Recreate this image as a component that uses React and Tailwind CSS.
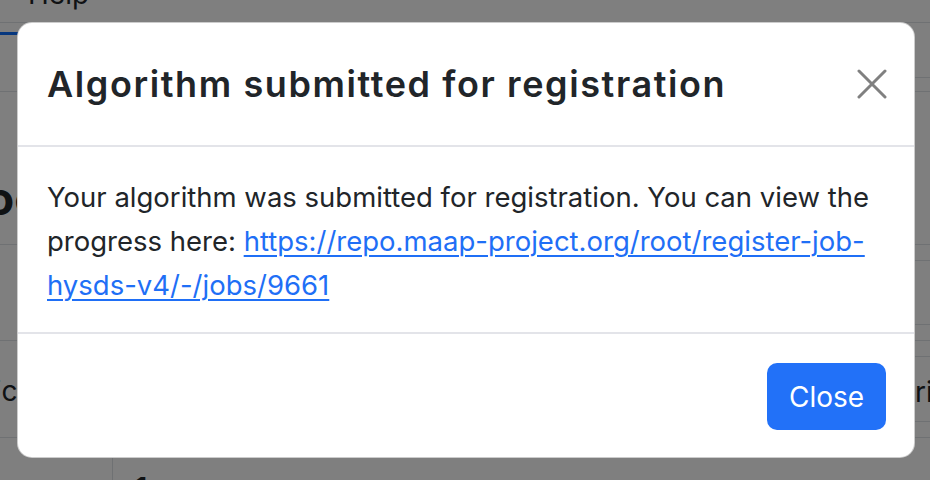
import React from "react";

const sans = "font-['Inter','Liberation_Sans',sans-serif]";

const Backdrop = () => {
  return (
    <div className={`flex h-full flex-col bg-white text-[#212529] ${sans}`}>
      <nav className="flex h-[23px] shrink-0 items-end border-b border-[#dee2e6] pl-[28px]">
        <span className="translate-y-[-10px] text-[28px] leading-[36px]">Help</span>
      </nav>
      <div className="flex h-[69px] shrink-0 border-b border-[#dee2e6]">
        <div className="mt-[9px] h-[3px] w-[260px] bg-[#0d6efd]" />
        <div className="ml-auto h-[55px] w-[60px] border-b border-[#dee2e6]" />
      </div>
      <div className="flex h-[153px] shrink-0 items-center border-b border-[#dee2e6]">
        <span className="-ml-[14px] translate-y-[30px] text-[46px] font-bold leading-none">oo</span>
      </div>
      <div className="flex h-[96px] shrink-0 justify-end border-b border-[#dee2e6]">
        <div className="my-[15px] w-[60px] border-y border-[#dee2e6]" />
      </div>
      <div className="flex h-[97px] shrink-0 items-center justify-between border-b border-[#dee2e6]">
        <span className="-ml-[12px] translate-y-[2px] text-[28px]">lic</span>
        <div className="my-[15px] flex w-[60px] items-center self-stretch border-y border-[#dee2e6] pl-[45px] pt-[6px] text-[28px]">
          rit
        </div>
      </div>
      <div className="flex flex-1">
        <div className="w-[113px] border-r border-[#dee2e6]" />
        <span className="ml-[22px] mt-[36px] text-[28px] font-bold leading-none">1</span>
      </div>
    </div>
  );
};

const Modal = () => {
  return (
    <div
      className={`absolute left-[17px] top-[22px] w-[898px] overflow-hidden rounded-[15px] border border-black/20 bg-white text-[#212529] ${sans}`}
    >
      <div className="flex h-[124px] items-center justify-between border-b-2 border-[#e3e4e9] pl-[29px] pr-[24px]">
        <h5 className="text-[36px] font-semibold leading-[44px] tracking-[1.6px]">
          Algorithm submitted for registration
        </h5>
        <button className="flex h-[36px] w-[36px] items-center justify-center text-[#808080]">
          <svg width="30" height="30" viewBox="0 0 30 30" fill="none">
            <path
              d="M2 2L28 28M28 2L2 28"
              stroke="currentColor"
              strokeWidth="3"
              strokeLinecap="round"
            />
          </svg>
        </button>
      </div>
      <div className="border-b-2 border-[#e3e4e9] px-[29px] pt-[28px] pb-[25px] text-[27.5px] leading-[44px]">
        Your algorithm was submitted for registration. You can view the progress here:{" "}
        <a
          href="#"
          className="text-[#1f6ff6] underline decoration-[2px] underline-offset-[4px]"
        >
          https://repo.maap-project.org/root/register-job-hysds-v4/-/jobs/9661
        </a>
      </div>
      <div className="flex justify-end pt-[29px] pb-[27px] pr-[28px]">
        <button className="h-[67px] w-[119px] rounded-[10px] bg-[#2271f8] text-[28px] text-white">
          Close
        </button>
      </div>
    </div>
  );
};

export default function App() {
  return (
    <div className="relative h-[480px] w-[930px] overflow-hidden">
      <Backdrop />
      <div className="absolute inset-0 bg-black/50" />
      <Modal />
    </div>
  );
}
